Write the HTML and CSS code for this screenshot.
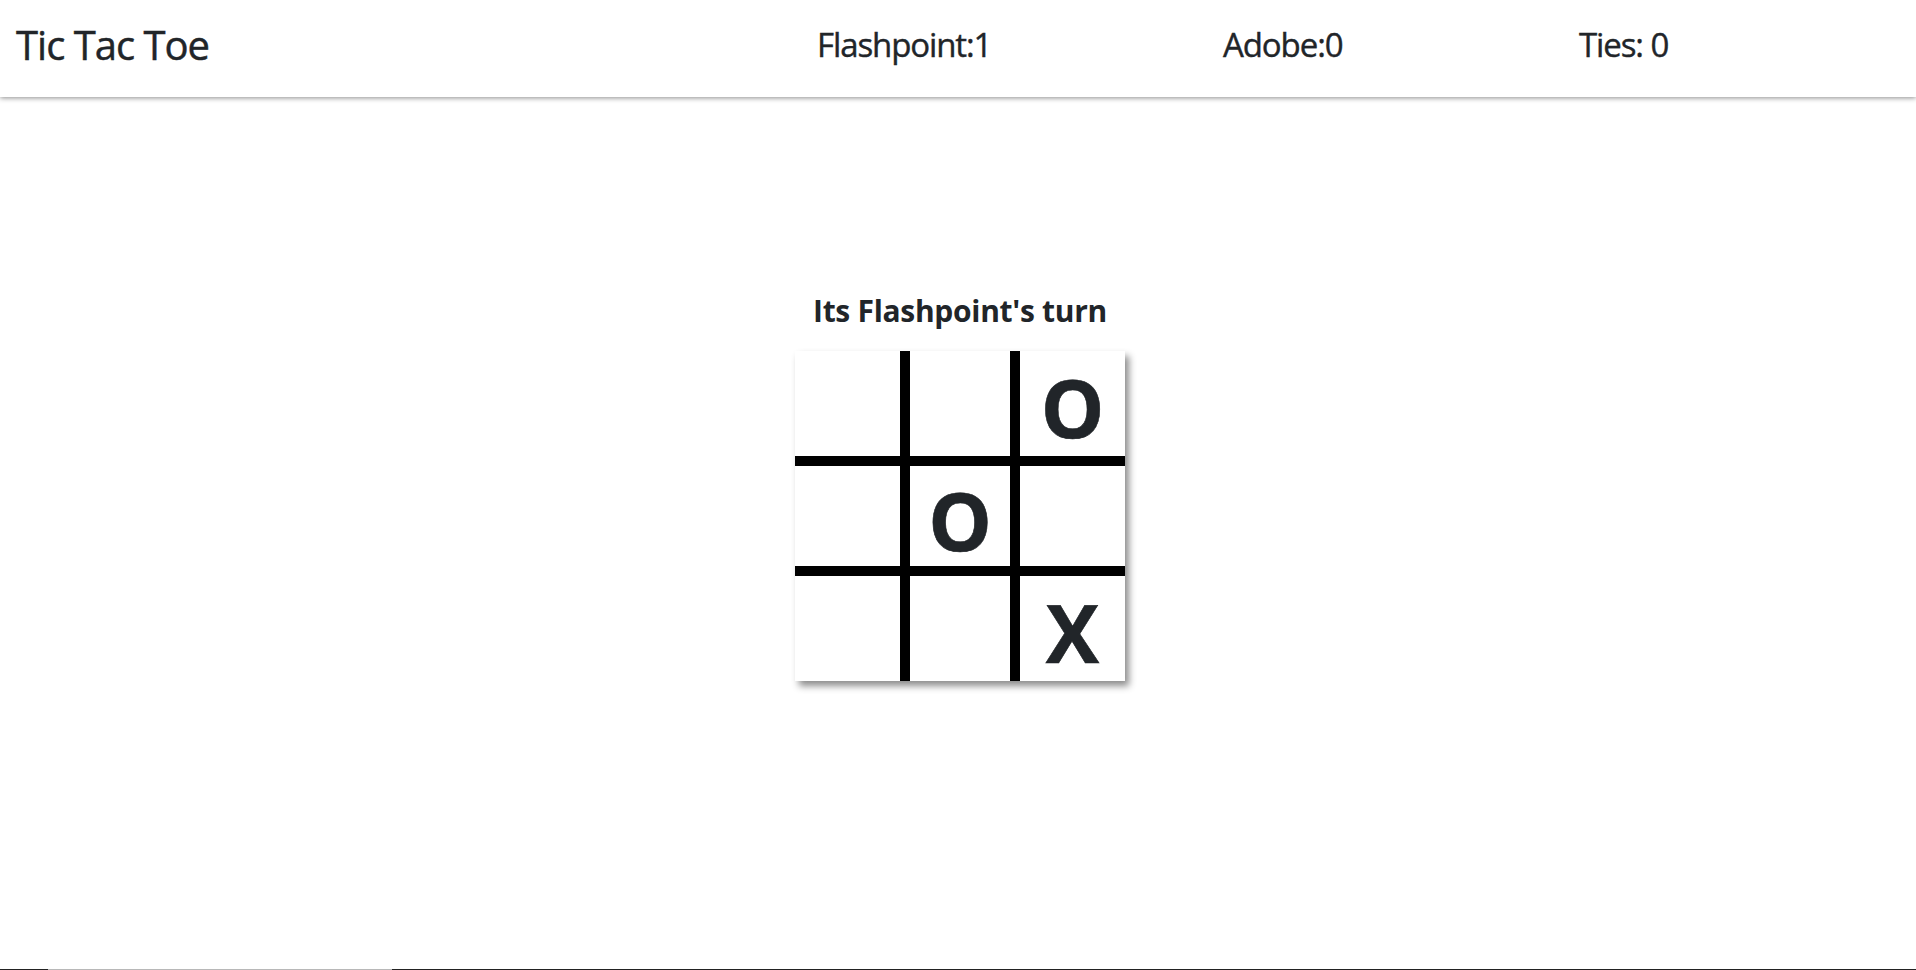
FILE: index.html
```html
<!DOCTYPE html>
<html lang="en">
<head>
<meta charset="utf-8">
<title>Tic Tac Toe</title>
<link rel="stylesheet" href="styles.css">
</head>
<body>
  <header class="topbar">
    <div class="brand">Tic Tac Toe</div>
    <div class="score">Flashpoint:1</div>
    <div class="score">Adobe:0</div>
    <div class="score">Ties: 0</div>
  </header>
  <main class="game">
    <h2 class="turn">Its Flashpoint's turn</h2>
    <div class="board">
      <div class="cell"></div>
      <div class="cell"></div>
      <div class="cell">O</div>
      <div class="cell"></div>
      <div class="cell">O</div>
      <div class="cell"></div>
      <div class="cell"></div>
      <div class="cell"></div>
      <div class="cell">X</div>
    </div>
  </main>
  <footer class="bottom-edge"></footer>
</body>
</html>
```
FILE: styles.css
```css
html, body {
  margin: 0;
  padding: 0;
  height: 100%;
}

body {
  display: grid;
  grid-template-rows: 97px 1fr 1px;
  font-family: "Open Sans", "Noto Sans", sans-serif;
  color: #212529;
  background: #ffffff;
  overflow: hidden;
}

.topbar {
  display: grid;
  grid-template-columns: 801px 406px 356px auto;
  align-items: center;
  padding: 0 16px 8px 16px;
  box-shadow: 0 1px 5px rgba(0, 0, 0, 0.45);
  position: relative;
  z-index: 1;
  background: #fff;
}

.brand {
  font-size: 40px;
  line-height: 48px;
  font-weight: 500;
  letter-spacing: -1px;
  -webkit-text-stroke: 0.45px #212529;
}

.score {
  font-size: 33px;
  line-height: 40px;
  font-weight: 500;
  letter-spacing: -1.1px;
  -webkit-text-stroke: 0.4px #212529;
}

.game {
  display: flex;
  flex-direction: column;
  align-items: center;
  padding-top: 196px;
  padding-left: 4px;
}

.turn {
  margin: 0 0 22px 0;
  font-size: 30px;
  line-height: 36px;
  font-weight: 700;
  letter-spacing: -0.3px;
}

.board {
  display: grid;
  grid-template-columns: repeat(3, 110px);
  grid-template-rows: repeat(3, 110px);
  box-shadow: 4px 5px 7px rgba(0, 0, 0, 0.45);
  background: #fff;
}

.cell {
  box-sizing: border-box;
  display: flex;
  align-items: center;
  justify-content: center;
  padding-top: 7px;
  font-size: 80px;
  line-height: 1;
  font-weight: 700;
  border: 0 solid #000;
  -webkit-text-stroke: 0.6px #212529;
}

.cell:nth-child(3n+1) { border-right-width: 5px; }
.cell:nth-child(3n+2) { border-left-width: 5px; border-right-width: 5px; }
.cell:nth-child(3n) { border-left-width: 5px; }
.cell:nth-child(-n+3) { border-bottom-width: 5px; }
.cell:nth-child(n+4):nth-child(-n+6) { border-top-width: 5px; border-bottom-width: 5px; }
.cell:nth-child(n+7) { border-top-width: 5px; }

.bottom-edge {
  background: linear-gradient(to right, #222 0, #222 48px, #b8b8b8 48px, #b8b8b8 392px, #222 392px, #222 100%);
}
```
